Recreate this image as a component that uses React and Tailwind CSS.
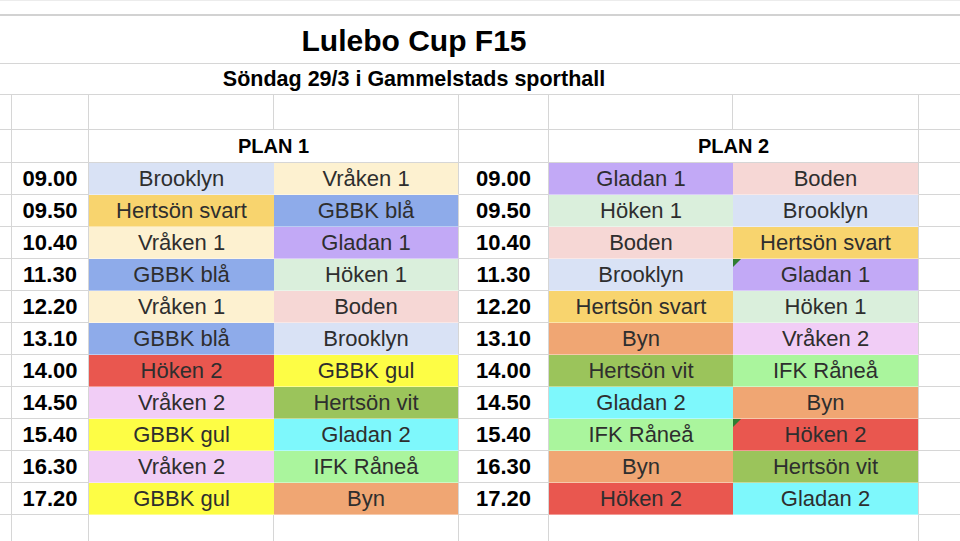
import React from "react";

const COLORS = {
  "Brooklyn": "bg-[#d9e2f5]",
  "Vråken 1": "bg-[#fdf1d0]",
  "Hertsön svart": "bg-[#f8d46e]",
  "GBBK blå": "bg-[#8eabea]",
  "Gladan 1": "bg-[#c2a9f6]",
  "Höken 1": "bg-[#daefdc]",
  "Boden": "bg-[#f6d7d5]",
  "Höken 2": "bg-[#e9574f]",
  "GBBK gul": "bg-[#fdfd45]",
  "Vråken 2": "bg-[#f1cdf6]",
  "Hertsön vit": "bg-[#9bc45b]",
  "Gladan 2": "bg-[#7ef8fc]",
  "IFK Råneå": "bg-[#aaf59d]",
  "Byn": "bg-[#f0a673]",
};

const ROWS = [
  ["09.00", "Brooklyn", "Vråken 1", "09.00", "Gladan 1", "Boden"],
  ["09.50", "Hertsön svart", "GBBK blå", "09.50", "Höken 1", "Brooklyn"],
  ["10.40", "Vråken 1", "Gladan 1", "10.40", "Boden", "Hertsön svart"],
  ["11.30", "GBBK blå", "Höken 1", "11.30", "Brooklyn", "Gladan 1", true],
  ["12.20", "Vråken 1", "Boden", "12.20", "Hertsön svart", "Höken 1"],
  ["13.10", "GBBK blå", "Brooklyn", "13.10", "Byn", "Vråken 2"],
  ["14.00", "Höken 2", "GBBK gul", "14.00", "Hertsön vit", "IFK Råneå"],
  ["14.50", "Vråken 2", "Hertsön vit", "14.50", "Gladan 2", "Byn"],
  ["15.40", "GBBK gul", "Gladan 2", "15.40", "IFK Råneå", "Höken 2", true],
  ["16.30", "Vråken 2", "IFK Råneå", "16.30", "Byn", "Hertsön vit"],
  ["17.20", "GBBK gul", "Byn", "17.20", "Höken 2", "Gladan 2"],
];

const G = "border-[#d6d6d6]";

function Blank({ r = true, b = true, span = "" }) {
  return (
    <div
      className={`${G} ${r ? "border-r" : ""} ${b ? "border-b" : ""} ${span}`}
    />
  );
}

function Time({ t }) {
  return (
    <div
      className={`${G} border-r border-b flex items-center justify-center text-[22px] font-bold text-black leading-none`}
    >
      {t}
    </div>
  );
}

function Team({ name, edge, flag }) {
  return (
    <div
      className={`relative flex items-center justify-center text-[22px] text-[#2e2e2e] leading-none border-b border-b-white/40 ${
        COLORS[name]
      } ${edge ? "border-r border-r-[#d6d6d6]" : ""}`}
    >
      {flag && (
        <svg
          className="absolute left-0 top-0"
          width="8"
          height="8"
          viewBox="0 0 8 8"
        >
          <polygon points="0,0 8,0 0,8" fill="#2f7d32" />
        </svg>
      )}
      {name}
    </div>
  );
}

export default function App() {
  return (
    <div
      className="w-[960px] h-[541px] bg-white overflow-hidden"
      style={{ fontFamily: '"Liberation Sans", Arial, sans-serif' }}
    >
      <div className="grid grid-cols-[12px_77px_185px_185px_90px_184px_186px_41px] grid-rows-[16px_48px_31px_35px_33px_repeat(11,32px)_26px]">
        {/* top strip */}
        <div className="col-span-8 border-t border-t-[#ececec] border-b-2 border-b-[#d2d2d2]" />
        {/* title */}
        <div className={`col-span-8 ${G} border-b flex items-center`}>
          <div className="w-[828px] text-center text-[30px] font-bold text-black leading-none pt-[2px]">
            Lulebo Cup F15
          </div>
        </div>
        {/* subtitle */}
        <div className={`col-span-8 ${G} border-b flex items-center`}>
          <div className="w-[828px] text-center text-[21.5px] font-bold text-black leading-none pt-[2px]">
            Söndag 29/3 i Gammelstads sporthall
          </div>
        </div>
        {/* empty row */}
        <Blank />
        <Blank />
        <Blank />
        <Blank />
        <Blank />
        <Blank />
        <Blank />
        <Blank r={false} />
        {/* plan row */}
        <Blank />
        <Blank />
        <div
          className={`col-span-2 ${G} border-r border-b flex items-center justify-center text-[20px] font-bold text-black leading-none`}
        >
          PLAN 1
        </div>
        <Blank />
        <div
          className={`col-span-2 ${G} border-r border-b flex items-center justify-center text-[20px] font-bold text-black leading-none`}
        >
          PLAN 2
        </div>
        <Blank r={false} />
        {/* data rows */}
        {ROWS.map((row, i) => (
          <React.Fragment key={i}>
            <Blank />
            <Time t={row[0]} />
            <Team name={row[1]} />
            <Team name={row[2]} edge />
            <Time t={row[3]} />
            <Team name={row[4]} />
            <Team name={row[5]} edge flag={row[6]} />
            <Blank r={false} />
          </React.Fragment>
        ))}
        {/* bottom row */}
        <Blank b={false} />
        <Blank b={false} />
        <Blank b={false} />
        <Blank b={false} />
        <Blank b={false} />
        <Blank r={false} b={false} />
        <Blank b={false} />
        <Blank r={false} b={false} />
      </div>
    </div>
  );
}
